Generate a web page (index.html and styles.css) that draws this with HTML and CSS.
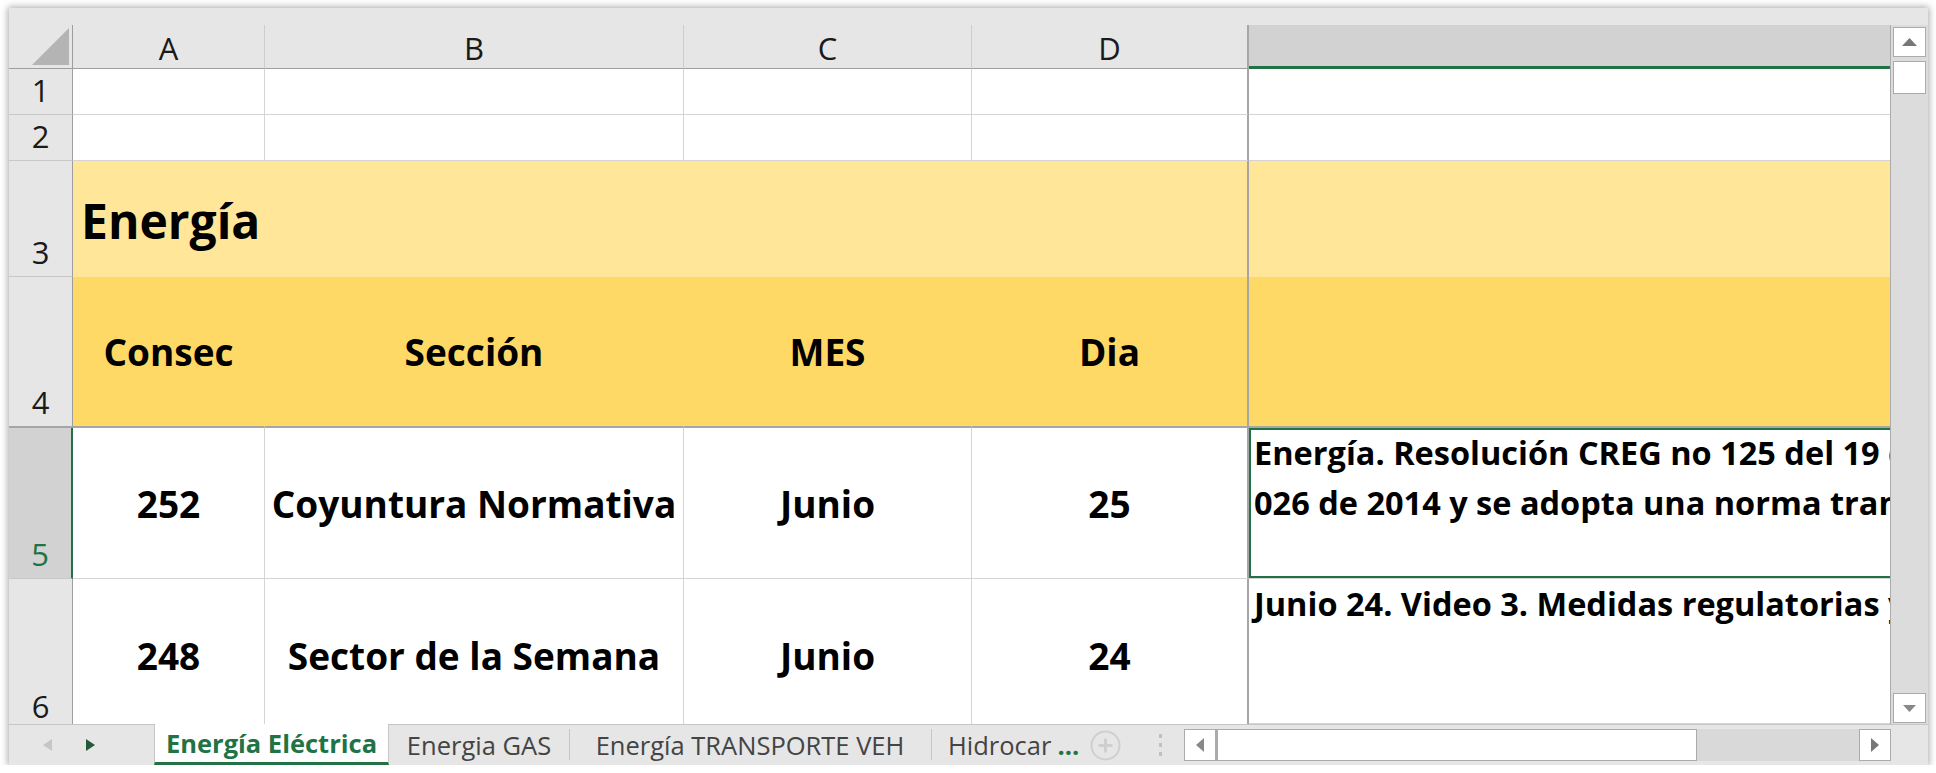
FILE: index.html
```html
<!DOCTYPE html>
<html lang="es">
<head>
  <meta charset="UTF-8">
  <title>Energía Eléctrica - Excel</title>
  <link rel="stylesheet" href="styles.css">
</head>
<body>
  <div class="window">
    <div class="topband"></div>

    <div class="main">
      <div class="sheet">
        <!-- column headers -->
        <div class="corner">
          <svg width="37" height="37" viewBox="0 0 37 37"><polygon points="37,0 37,37 0,37" fill="#b4b4b4"/></svg>
        </div>
        <div class="hd">A</div>
        <div class="hd">B</div>
        <div class="hd">C</div>
        <div class="hd hd-freeze">D</div>
        <div class="hd hd-sel"></div>

        <!-- row 1 -->
        <div class="rh">1</div>
        <div class="c"></div>
        <div class="c"></div>
        <div class="c"></div>
        <div class="c c-freeze"></div>
        <div class="c c-last"></div>

        <!-- row 2 -->
        <div class="rh">2</div>
        <div class="c"></div>
        <div class="c"></div>
        <div class="c"></div>
        <div class="c c-freeze"></div>
        <div class="c c-last"></div>

        <!-- row 3 -->
        <div class="rh">3</div>
        <div class="c title">Energía</div>
        <div class="c title-rest"></div>

        <!-- row 4 -->
        <div class="rh rh-freeze">4</div>
        <div class="c th">Consec</div>
        <div class="c th">Sección</div>
        <div class="c th">MES</div>
        <div class="c th c-freeze">Dia</div>
        <div class="c th c-last"></div>

        <!-- row 5 -->
        <div class="rh rh-sel">5</div>
        <div class="c td">252</div>
        <div class="c td">Coyuntura Normativa</div>
        <div class="c td">Junio</div>
        <div class="c td c-freeze">25</div>
        <div class="c desc c-last active">
          <div>Energía. Resolución CREG no 125 del 19 de junio de 2020, por la cual se modifica la Resolución CREG</div>
          <div>026 de 2014 y se adopta una norma transitoria</div>
        </div>

        <!-- row 6 -->
        <div class="rh rh-last">6</div>
        <div class="c td td-last">248</div>
        <div class="c td td-last">Sector de la Semana</div>
        <div class="c td td-last">Junio</div>
        <div class="c td td-last c-freeze">24</div>
        <div class="c desc c-last">
          <div>Junio 24. Video 3. Medidas regulatorias y normativas del sector</div>
        </div>
      </div>

      <div class="vscroll">
        <div class="sbtn sbtn-up">
          <svg width="15" height="8" viewBox="0 0 15 8"><polygon points="7.5,0 15,8 0,8" fill="#777"/></svg>
        </div>
        <div class="vthumb"></div>
        <div class="sbtn sbtn-down">
          <svg width="13" height="7" viewBox="0 0 13 7"><polygon points="0,0 13,0 6.5,7" fill="#888"/></svg>
        </div>
      </div>
    </div>

    <div class="tabbar">
      <div class="nav">
        <svg class="nav-prev" width="9" height="12" viewBox="0 0 9 12"><polygon points="9,0 9,12 0,6" fill="#c6c6c6"/></svg>
        <svg class="nav-next" width="9" height="12" viewBox="0 0 9 12"><polygon points="0,0 9,6 0,12" fill="#26573b"/></svg>
      </div>
      <div class="tab tab-active tab-w1">Energía Eléctrica</div>
      <div class="tab tab-w2">Energia GAS</div>
      <div class="tab tab-w3">Energía TRANSPORTE VEH</div>
      <div class="tab tab-w4">Hidrocar <span class="more">...</span></div>
      <div class="addsheet">
        <svg width="31" height="31" viewBox="0 0 31 31">
          <circle cx="15.5" cy="15.5" r="14" fill="none" stroke="#cfcfcf" stroke-width="2"/>
          <path d="M15.5 8.5v14M8.5 15.5h14" stroke="#cfcfcf" stroke-width="3"/>
        </svg>
      </div>
      <div class="split">
        <span></span><span></span><span></span>
      </div>
      <div class="hscroll">
        <div class="hbtn">
          <svg width="8" height="14" viewBox="0 0 8 14"><polygon points="8,0 8,14 0,7" fill="#888"/></svg>
        </div>
        <div class="hthumb"></div>
        <div class="htrack"></div>
        <div class="hbtn">
          <svg width="8" height="14" viewBox="0 0 8 14"><polygon points="0,0 8,7 0,14" fill="#777"/></svg>
        </div>
      </div>
    </div>
  </div>
</body>
</html>
```

FILE: styles.css
```css
body {
  margin: 0;
  background: #fff;
  font-family: 'Open Sans', 'Liberation Sans', sans-serif;
  color: #000;
}
.window {
  margin: 8px 0 0 9px;
  width: 1919px;
  height: 757px;
  background: #e6e6e6;
  box-shadow: 0 0 7px 1px rgba(0,0,0,0.35);
  overflow: hidden;
}
.topband {
  height: 17px;
}
.main {
  display: flex;
  height: 699px;
}

/* grid of cells */
.sheet {
  display: grid;
  grid-template-columns: 64px 192px 419px 288px 277px 641px;
  grid-template-rows: 44px 46px 46px 116px 151px 151px 145px;
  width: 1881px;
  height: 699px;
  overflow: hidden;
  background: #fff;
}
.sheet > div {
  box-sizing: border-box;
  min-width: 0;
}
.corner {
  background: #e6e6e6;
  border-right: 1px solid #9e9e9e;
  border-bottom: 1px solid #9e9e9e;
  display: flex;
  align-items: flex-end;
  justify-content: flex-end;
  padding: 0 3px 3px 0;
}
.hd {
  background: #e6e6e6;
  border-right: 1px solid #cdcdcd;
  border-bottom: 1px solid #9e9e9e;
  display: flex;
  align-items: center;
  justify-content: center;
  padding-top: 3px;
  font-size: 31px;
  color: #1a1a1a;
}
.hd-freeze {
  border-right: 2px solid #a6a6a6;
}
.hd-sel {
  background: #d2d2d2;
  border-right: none;
  border-bottom: 3px solid #217346;
}
.rh {
  background: #e6e6e6;
  border-right: 1px solid #9e9e9e;
  border-bottom: 1px solid #c8c8c8;
  display: flex;
  align-items: flex-end;
  justify-content: center;
  padding-bottom: 8px;
  font-size: 31px;
  line-height: 31px;
  color: #1a1a1a;
}
.rh-freeze {
  border-bottom: 2px solid #a6a6a6;
}
.rh-sel {
  background: #d2d2d2;
  color: #217346;
  border-right: 2px solid #217346;
}
.rh-last {
  border-bottom: none;
  padding-bottom: 2px;
}
.c {
  border-right: 1px solid #d4d4d4;
  border-bottom: 1px solid #d4d4d4;
}
.c-freeze {
  border-right: 2px solid #a6a6a6;
}
.c-last {
  border-right: none;
}

/* row 3: section title */
.title {
  grid-column: 2 / span 4;
  background: #ffe699;
  border-bottom: none;
  border-right: 2px solid #a6a6a6;
  display: flex;
  align-items: center;
  padding-left: 8px;
  padding-top: 2px;
  font-size: 48px;
  font-weight: 700;
}
.title-rest {
  background: #ffe699;
  border-right: none;
  border-bottom: none;
}

/* row 4: table header */
.th {
  background: #ffd966;
  border-right-color: #ffd966;
  border-bottom: 2px solid #a6a6a6;
  display: flex;
  align-items: center;
  justify-content: center;
  font-size: 37px;
  font-weight: 700;
}
.th.c-freeze {
  border-right-color: #a6a6a6;
}

/* data rows */
.td {
  display: flex;
  align-items: center;
  justify-content: center;
  font-size: 37px;
  font-weight: 700;
  white-space: nowrap;
}
.td-last {
  border-bottom: none;
  padding-top: 8px;
}
.desc {
  padding-left: 5px;
  font-size: 32.5px;
  font-weight: 700;
  line-height: 50px;
  white-space: nowrap;
  overflow: hidden;
}
.active {
  box-shadow: inset 2px 0 0 #217346, inset 0 2px 0 #217346, inset 0 -2px 0 #217346;
}

/* vertical scrollbar */
.vscroll {
  width: 38px;
  box-sizing: border-box;
  border-left: 1px solid #ababab;
  background: #dcdcdc;
  display: flex;
  flex-direction: column;
  padding: 2px 2px 1px 2px;
}
.sbtn, .vthumb {
  background: #fff;
  border: 1px solid #ababab;
  box-sizing: border-box;
}
.sbtn {
  height: 30px;
  display: flex;
  align-items: center;
  justify-content: center;
}
.vthumb {
  height: 33px;
  margin-top: 4px;
}
.sbtn-down {
  margin-top: auto;
}

/* sheet tabs */
.tabbar {
  display: flex;
  height: 41px;
  box-sizing: border-box;
  border-top: 1px solid #c6c6c6;
  font-size: 25.5px;
  color: #444;
}
.nav {
  width: 145px;
  display: flex;
  align-items: center;
  padding-left: 34px;
  gap: 34px;
  box-sizing: border-box;
}
.tab {
  display: flex;
  align-items: center;
  justify-content: center;
  box-sizing: border-box;
  white-space: nowrap;
  position: relative;
}
.tab + .tab::before {
  content: "";
  position: absolute;
  left: 0;
  top: 4px;
  bottom: 5px;
  border-left: 1px solid #c6c6c6;
}
.tab-active {
  background: #fff;
  color: #217346;
  font-weight: 700;
  margin-top: -1px;
  border-left: 1px solid #c6c6c6;
  border-right: 1px solid #c6c6c6;
  border-bottom: 3px solid #217346;
}
.tab-active + .tab::before {
  display: none;
}
.tab-w1 { width: 235px; }
.tab-w2 { width: 180px; }
.tab-w3 { width: 362px; }
.tab-w4 {
  width: 159px;
  justify-content: flex-start;
  padding-left: 17px;
}
.more {
  color: #217346;
  font-weight: 700;
  margin-left: 6px;
}
.addsheet {
  width: 51px;
  display: flex;
  align-items: center;
}
.split {
  width: 43px;
  display: flex;
  flex-direction: column;
  justify-content: center;
  gap: 5px;
  padding-left: 18px;
  box-sizing: border-box;
}
.split span {
  width: 3px;
  height: 4px;
  background: #c0c0c0;
}
.hscroll {
  display: flex;
  width: 707px;
  height: 32px;
  margin-top: 4px;
}
.hbtn, .hthumb {
  background: #fff;
  border: 1px solid #ababab;
  box-sizing: border-box;
}
.hbtn {
  width: 32px;
  display: flex;
  align-items: center;
  justify-content: center;
}
.hthumb {
  width: 481px;
  border-left-width: 2px;
}
.htrack {
  flex: 1;
  background: #d9d9d9;
}
```
